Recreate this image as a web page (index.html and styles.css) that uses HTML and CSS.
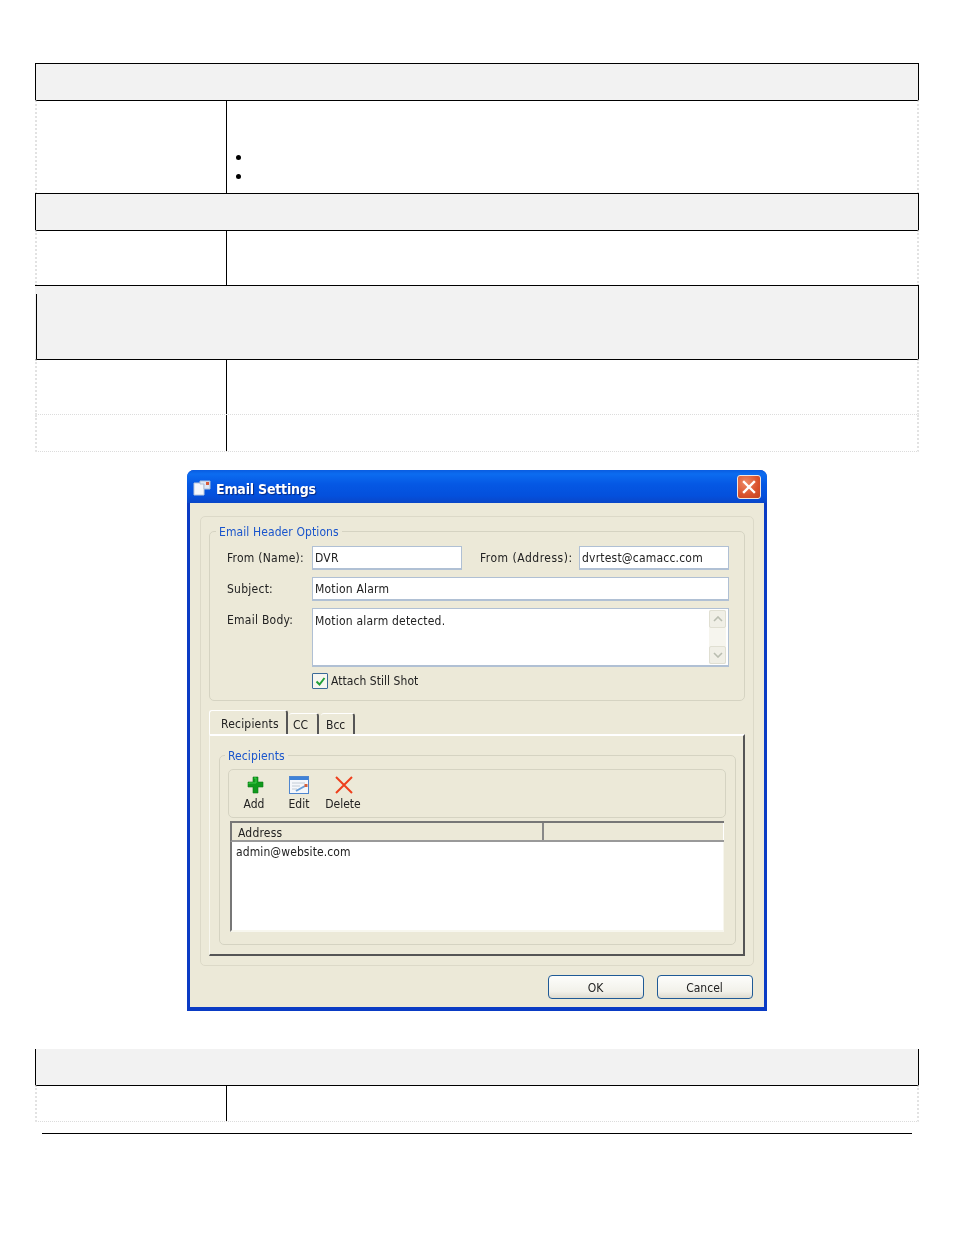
FILE: index.html
```html
<!DOCTYPE html>
<html lang="en">
<head>
<meta charset="utf-8">
<title>Email Settings</title>
<link rel="stylesheet" href="styles.css">
</head>
<body>
<main class="page">
  <section class="doc-table">
    <div class="hdr"></div>
    <div class="row row-bullets">
      <div class="cell-l"></div>
      <div class="cell-r"><ul class="bullets"><li></li><li></li></ul></div>
    </div>
    <div class="hdr"></div>
    <div class="row row-54"></div>
    <div class="hdr hdr-tall"></div>
    <div class="row row-55 row-dotted"></div>
    <div class="row row-37 row-dotted"></div>
  </section>

  <section class="dialog">
    <header class="titlebar">
      <svg class="app-icon" width="18" height="16" viewBox="0 0 18 16"><path d="M1 3h10v12H1z" fill="#f4f7fc" stroke="#b9c7dc"/><path d="M7 1h10v8h-6V4H7z" fill="#dfe8f6" stroke="#aebfd8"/><rect x="13" y="2" width="3" height="3" fill="#d8593a"/></svg>
      <span class="title">Email Settings</span>
      <span class="close"><svg width="14" height="14" viewBox="0 0 14 14"><path d="M2 2l10 10M12 2L2 12" stroke="#fff" stroke-width="2.4" stroke-linecap="square"/></svg></span>
    </header>
    <div class="dlg-body">
      <div class="outer-group">
        <div class="group header-group">
          <span class="legend">Email Header Options</span>
          <div class="form">
            <span class="lbl">From (Name):</span>
            <div class="line">
              <div class="field w150">DVR</div>
              <span class="lbl lbl-addr">From (Address):</span>
              <div class="field w150 push">dvrtest@camacc.com</div>
            </div>
            <span class="lbl">Subject:</span>
            <div class="field">Motion Alarm</div>
            <span class="lbl lbl-body">Email Body:</span>
            <div class="field field-body">
              <span class="body-text">Motion alarm detected.</span>
              <div class="scrollbar">
                <span class="sb-btn"><svg width="10" height="6" viewBox="0 0 10 6"><path d="M1 5l4-4 4 4" fill="none" stroke="#b9bdb0" stroke-width="1.6"/></svg></span>
                <span class="sb-btn"><svg width="10" height="6" viewBox="0 0 10 6"><path d="M1 1l4 4 4-4" fill="none" stroke="#b9bdb0" stroke-width="1.6"/></svg></span>
              </div>
            </div>
            <span></span>
            <div class="check-row">
              <span class="check"><svg width="11" height="11" viewBox="0 0 11 11"><path d="M1.500 5.500l3 3 5-6.500" fill="none" stroke="#22a13a" stroke-width="2"/></svg></span>
              <span>Attach Still Shot</span>
            </div>
          </div>
        </div>

        <div class="tabs">
          <span class="tab tab-active">Recipients</span>
          <span class="tab tab-cc">CC</span>
          <span class="tab tab-bcc">Bcc</span>
        </div>
        <div class="tab-panel">
          <div class="group rec-group">
            <span class="legend">Recipients</span>
            <div class="toolbar">
              <div class="tool tool-add">
                <svg width="18" height="18" viewBox="0 0 18 18"><path d="M6 1h5v5h5v5h-5v6H6v-6H1V6h5z" fill="#0f9a1c" stroke="#0a7a14" stroke-width=".6"/><path d="M7 2h2v5H2v1" fill="none" stroke="#3fce4a" stroke-width="1"/></svg>
                <span>Add</span>
              </div>
              <div class="tool tool-edit">
                <svg width="20" height="18" viewBox="0 0 20 18"><rect x=".5" y=".5" width="19" height="17" fill="#f5f7fb" stroke="#4f86cf"/><rect x="1" y="1" width="18" height="3" fill="#3f82d8"/><path d="M3 7h13M3 10h8M3 13h5" stroke="#c3ccd6"/><path d="M7 15l9-5" stroke="#6a9fd8" stroke-width="2"/><rect x="15.500" y="8" width="3" height="3" fill="#d5603c"/></svg>
                <span>Edit</span>
              </div>
              <div class="tool tool-del">
                <svg width="20" height="18" viewBox="0 0 20 18"><path d="M2 1l16 16M18 1L2 17" stroke="#ee3f1c" stroke-width="2"/></svg>
                <span>Delete</span>
              </div>
            </div>
            <div class="list">
              <div class="list-head">
                <span class="col-a">Address</span>
                <span class="col-b"></span>
              </div>
              <div class="list-body">admin@website.com</div>
            </div>
          </div>
        </div>
      </div>
      <div class="buttons">
        <span class="btn">OK</span>
        <span class="btn">Cancel</span>
      </div>
    </div>
  </section>

  <section class="doc-table table-last">
    <div class="hdr hdr-open"></div>
    <div class="row row-36 row-last"></div>
  </section>
  <hr class="foot-line">
</main>
</body>
</html>
```
FILE: styles.css
```css
* { box-sizing: border-box; }
html, body { margin: 0; padding: 0; background: #fff; }
body { font-family: "DejaVu Sans Condensed", "DejaVu Sans", sans-serif; font-size: 12px; color: #222; }
.page { width: 954px; height: 1235px; padding: 63px 0 0 35px; overflow: hidden; }

/* Document tables */
.doc-table { width: 884px; }
.hdr { height: 38px; background: #f2f2f2; border: 1px solid #000; }
.hdr + .row { margin-top: -1px; border-top: 1px solid #000; }
.row {
  display: grid;
  grid-template-columns: 190px 1fr;
  border-left: 2px dotted #e2e2e2;
  border-right: 2px dotted #e2e2e2;
  background: linear-gradient(#000, #000) 189px 0 / 1px 100% no-repeat;
}
.hdr-tall {
  height: 75px;
  border-left: 0;
  background: linear-gradient(#000, #000) 1px 8px / 1px 100% no-repeat #f2f2f2;
}
.row-bullets { height: 94px; margin-bottom: -1px; display: grid; }
.cell-r { position: relative; min-width: 0; }
.bullets { margin: 0; padding: 54px 0 0 9px; list-style: none; }
.bullets li { width: 5px; height: 5px; border-radius: 50%; background: #000; margin-bottom: 14px; }
.row-54 { height: 56px; margin-bottom: -1px; }
.row-55 { height: 56px; border-bottom: 1px dotted #dcdcdc; }
.row-37 { height: 37px; border-bottom: 1px dotted #dcdcdc; }
.row-dotted { background-size: 1px 100%; }

/* Dialog */
.dialog {
  width: 580px;
  height: 541px;
  margin: 18px 0 0 152px;
  display: flex;
  flex-direction: column;
  border-radius: 7px 7px 0 0;
  background: #0a3bc4;
  overflow: hidden;
  filter: blur(.4px);
}
.titlebar {
  height: 33px;
  flex: none;
  display: flex;
  align-items: center;
  padding: 2px 6px 0 6px;
  background: linear-gradient(#0a5ce0 0, #0c6cf0 4px, #0558e4 14px, #0450dc 26px, #0a46c8 100%);
}
.app-icon { flex: none; }
.title { margin: 2px 0 0 5px; color: #fff; font: bold 14px "DejaVu Sans Condensed", sans-serif; letter-spacing: -.2px; text-shadow: 1px 1px 1px #0a2a80; }
.close {
  margin-left: auto;
  margin-top: -1px;
  width: 24px;
  height: 24px;
  display: flex;
  align-items: center;
  justify-content: center;
  border: 1px solid #f2e4dc;
  border-radius: 3px;
  background: radial-gradient(circle at 35% 30%, #ee8a66, #d9512c 60%, #c2421f);
}
.dlg-body {
  flex: 1;
  margin: 0 3px 4px;
  padding: 13px 10px 0;
  background: #ece9d8;
  display: flex;
  flex-direction: column;
}
.outer-group {
  height: 450px;
  width: 554px;
  padding: 14px 8px 0;
  border: 1px solid #dcd9c8;
  border-radius: 5px;
}
.group { position: relative; border: 1px solid #d5d3c2; border-radius: 5px; }
.legend {
  position: absolute;
  top: -7px;
  left: 6px;
  padding: 0 3px;
  background: #ece9d8;
  color: #1a55cc;
  line-height: 14px;
  letter-spacing: .1px;
}
.header-group { height: 170px; padding: 14px 15px 0 17px; }
.form { display: grid; grid-template-columns: 85px 1fr; row-gap: 7px; align-items: center; }
.line { display: flex; align-items: center; }
.lbl { letter-spacing: .25px; }
.lbl-addr { margin-left: 18px; letter-spacing: .5px; }
.push { margin-left: auto; }
.lbl-body { align-self: start; padding-top: 5px; }
.field {
  height: 24px;
  line-height: 23px;
  padding: 0 2px;
  background: #fff;
  border: 2px solid #b0c0d4;
  border-width: 1px 1px 2px 1px;
  letter-spacing: .2px;
}
.w150 { width: 150px; }
.field-body { height: 59px; position: relative; display: flex; justify-content: space-between; }
.body-text { padding-top: 1px; }
.scrollbar { width: 17px; margin: 1px 0; display: flex; flex-direction: column; justify-content: space-between; background: #f6f5ee; }
.sb-btn { height: 18px; display: flex; align-items: center; justify-content: center; background: #f0efe6; border: 1px solid #e0dfd2; border-radius: 2px; }
.check-row { display: flex; align-items: center; gap: 3px; margin-top: -1px; letter-spacing: .05px; }
.check { width: 16px; height: 16px; display: flex; align-items: center; justify-content: center; background: #f6f6f0; border: 1px solid #3a6a98; border-radius: 1px; }

/* Tabs */
.tabs { display: flex; align-items: flex-end; height: 23px; margin-top: 10px; }
.tab {
  height: 21px;
  padding-top: 4px;
  border-right: 2px solid #555;
  border-top: 1px solid #fff;
  border-radius: 3px 3px 0 0;
}
.tab-active { width: 79px; height: 24px; margin-right: 1px; padding: 6px 0 0 11px; border-left: 1px solid #fff; letter-spacing: .2px; }
.tab-cc { width: 30px; margin-right: 2px; padding-left: 4px; }
.tab-bcc { width: 34px; padding-left: 5px; }
.tab-panel {
  height: 222px;
  width: 536px;
  padding: 19px 7px 0 9px;
  border-top: 2px solid #fff;
  border-left: 1px solid #f8f7ef;
  border-right: 2px solid #555;
  border-bottom: 2px solid #555;
}
.rec-group { height: 190px; padding: 13px 9px 0 8px; }
.rec-group .legend { left: 5px; }
.toolbar {
  height: 49px;
  display: flex;
  border: 1px solid #d5d3c2;
  border-radius: 5px;
  padding: 6px 0 0 13px;
}
.tool { display: flex; flex-direction: column; align-items: center; gap: 3px; line-height: 15px; }
.tool svg { display: block; }
.tool-add { width: 24px; }
.tool-add svg { margin-left: 3px; }
.tool-edit { width: 22px; margin-left: 22px; }
.tool-del { width: 38px; margin-left: 14px; }
.tool-del svg { margin-left: 1px; }
.list { height: 111px; margin: 3px 2px 0 2px; }
.list-head {
  height: 21px;
  display: flex;
  background: #ece9d8;
  border-top: 2px solid #777;
  border-bottom: 2px solid #999;
  border-left: 2px solid #777;
}
.col-a { width: 312px; padding: 1px 0 0 6px; line-height: 18px; border-right: 2px solid #888; letter-spacing: .2px; }
.col-b { flex: 1; border-right: 1px solid #fff; }
.list-body { height: 90px; padding-left: 4px; line-height: 20px; background: #fff; border-left: 2px solid #777; border-right: 1px solid #f7f6ee; border-bottom: 2px solid #f7f6ee; letter-spacing: .1px; }
.buttons { display: flex; justify-content: flex-end; gap: 13px; margin-top: 9px; padding-right: 1px; }
.btn {
  width: 96px;
  height: 24px;
  line-height: 24px;
  padding-right: 1px;
  text-align: center;
  border: 1px solid #1f5a96;
  border-radius: 4px;
  background: linear-gradient(#fdfdfb, #f2f1ea 70%, #dedbd0);
}

/* Last table */
.table-last { margin-top: 38px; }
.hdr-open { height: 37px; border-top: 0; }
.row-36 { height: 37px; }
.row-last { border-bottom: 1px dotted #dcdcdc; background-size: 1px 100%; }
.foot-line { width: 870px; height: 1px; margin: 11px 0 0 7px; border: 0; background: #000; }
```
